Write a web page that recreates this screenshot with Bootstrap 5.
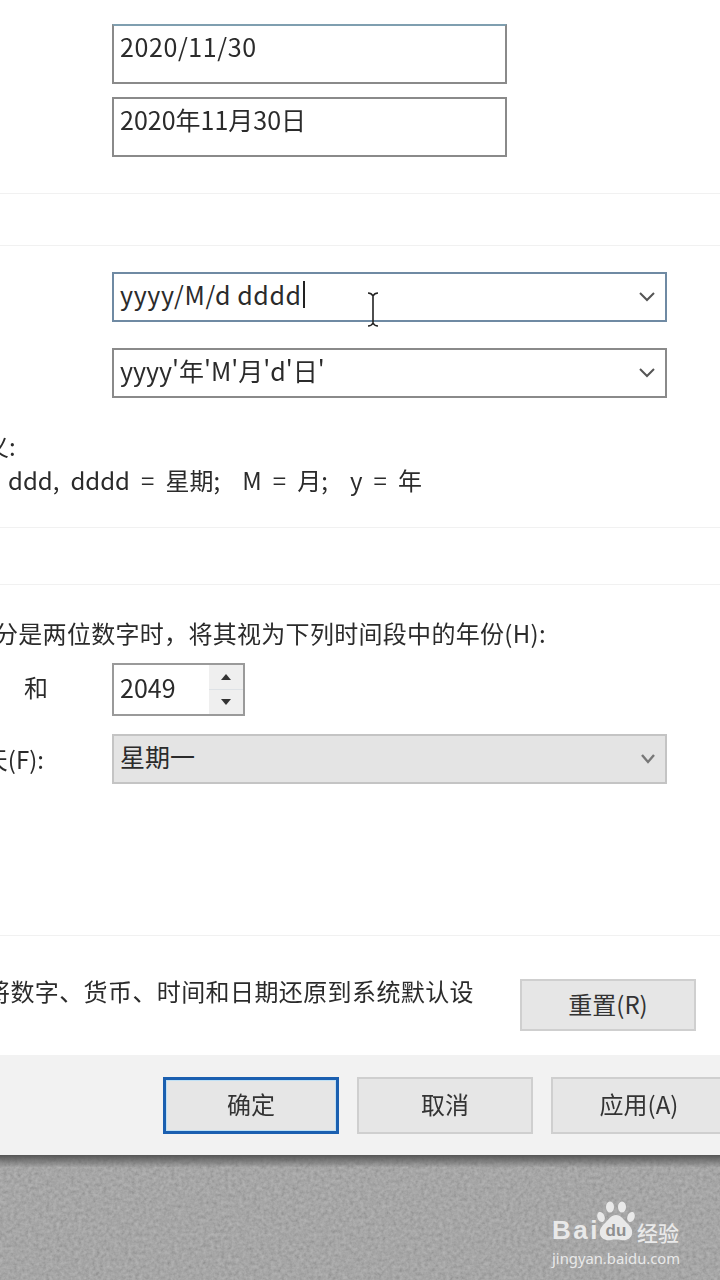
<!DOCTYPE html>
<html lang="zh-CN">
<head>
  <title>区域格式设置</title>
  <meta charset="UTF-8">
  <meta name="viewport" content="width=device-width, initial-scale=1">
  <link href="https://cdn.jsdelivr.net/npm/bootstrap@5.3.0/dist/css/bootstrap.min.css" rel="stylesheet">
  <style>
    html, body { height: 1280px; overflow: hidden; }
    body { font-family: "Noto Sans CJK SC", "Noto Sans", sans-serif; color: #2b2b2b; background: #fff; }
    .dlg-body { height: 1055px; background: #fff; overflow: hidden; }
    .dlg-inner { filter: blur(.6px); }
    .field, .combo, .spin-box {
      border: 2px solid #8a8a8a; border-radius: 0; background: #fff; color: #2b2b2b;
      font-size: 25px; line-height: 1; padding: 0 0 0 6px;
    }
    .wide-txt { letter-spacing: .6px; }
    .field { width: 395px; height: 60px; margin-left: 112px; padding-top: 8px; }
    .field-a { margin-top: 24px; border-top-color: #7f9fb0; }
    .field-b { margin-top: 13px; }
    .hair { height: 1px; background: #f1f1f1; }
    .hair-a { margin-top: 36px; }
    .hair-b { margin-top: 51px; }
    .combo { width: 555px; height: 50px; margin-left: 112px; padding-right: 10px; padding-bottom: 5px; }
    .combo svg.chev { margin-top: 5px; }
    .combo-a { margin-top: 26px; border-color: #6f8aa3; position: relative; }
    .combo-b { margin-top: 26px; }
    .combo-c { background: #e4e4e4; border-color: #c4c4c4; }
    .caret-bar { width: 2px; height: 27px; background: #222; margin-left: 1px; }
    .ibeam { position: absolute; left: 252px; top: 18px; }
    .txt-line { white-space: nowrap; font-size: 24px; line-height: 34px; }
    .clip-line { display: flex; justify-content: flex-end; overflow: hidden; white-space: nowrap; font-size: 24px; line-height: 34px; }
    .hint-a { margin-top: 31px; margin-left: -15px; }
    .hint-b { margin-left: 8px; word-spacing: 5.7px; }
    .hair-c { margin-top: 30px; }
    .hair-d { margin-top: 56px; }
    .hint-c { margin-top: 31px; margin-left: -6px; letter-spacing: .3px; }
    .year-row { margin-top: 13px; height: 53px; }
    .and-label { width: 112px; padding-left: 24px; font-size: 24px; padding-bottom: 5px; }
    .spin-box { width: 133px; height: 53px; border-color: #9a9a9a; padding-right: 0; }
    .spin-num { padding-bottom: 5px; }
    .spin-btns { width: 34px; height: 100%; background: #efefef; }
    .spin-btn { height: 50%; }
    .day-row { margin-top: 18px; height: 50px; }
    .day-label { width: 112px; flex: none; }
    .day-clip { width: 44px; }
    .day-row .combo { margin-left: 0; }
    .hair-e { margin-top: 151px; }
    .reset-row { margin-top: 43px; height: 53px; padding-right: 24px; }
    .reset-label { width: 474px; margin-top: -5px; letter-spacing: .4px; }
    .push-btn {
      border: 2px solid #cfcfcf; border-radius: 0; background: #e6e6e6; color: #333;
      font-size: 24px; line-height: 1; padding: 0 0 4px;
    }
    .reset-btn { width: 176px; height: 52px; margin-left: 46px; padding-bottom: 2px; }
    .dlg-foot { height: 100px; background: #f2f2f2; padding-top: 22px; overflow: hidden; }
    .dlg-foot .push-btn { height: 57px; flex: none; width: 176px; }
    .foot-gap { margin-left: 163px; gap: 18px; }
    .push-btn.is-default { border: 3px solid #1a5fb0; box-shadow: inset 0 0 0 1px #bfe0f5; }
    .desk { position: relative; height: 125px; overflow: hidden; background: #9c9c9c; }
    .desk-edge { position: absolute; left: 0; right: 0; top: 0; height: 12px; background: linear-gradient(#555, rgba(120,120,120,.1)); }
    .desk-noise { display: block; }
    .mark-box { position: absolute; left: 552px; top: 47px; width: 132px; color: #e9e9e9; }
    .mark-top { height: 46px; align-items: flex-end; padding-bottom: 5px; font-family: "Liberation Sans", sans-serif; font-weight: 700; font-size: 26px; line-height: 1; letter-spacing: 2.5px; }
    .mark-paw { flex: none; margin-left: -3px; }
    .mark-cn { font-family: "Noto Sans CJK SC", sans-serif; font-weight: 500; font-size: 21px; margin-left: 2px; letter-spacing: 0; }
    .mark-url { font-family: "Noto Sans", sans-serif; font-size: 14.8px; line-height: 20px; white-space: nowrap; }
  </style>
</head>
<body>

<div class="dlg-body">
  <div class="dlg-inner">
    <div class="field field-a wide-txt">2020/11/30</div>
    <div class="field field-b">2020年11月30日</div>
    <div class="hair hair-a"></div>
    <div class="hair hair-b"></div>

    <div class="combo combo-a d-flex align-items-center">
      <span class="wide-txt">yyyy/M/d dddd</span><span class="caret-bar"></span>
      <svg class="ibeam" width="14" height="35" viewBox="0 0 14 35" fill="none" stroke="#222" stroke-width="1.6"><path d="M2 1c3 0 4 1 5 3 1-2 2-3 5-3M7 4v27M2 34c3 0 4-1 5-3 1 2 2 3 5 3"/></svg>
      <svg class="chev ms-auto" width="16" height="10" viewBox="0 0 16 10" fill="none" stroke="#555" stroke-width="2"><path d="M1 1l7 7 7-7"/></svg>
    </div>
    <div class="combo combo-b d-flex align-items-center">
      <span>yyyy'年'M'月'd'日'</span>
      <svg class="chev ms-auto" width="16" height="10" viewBox="0 0 16 10" fill="none" stroke="#555" stroke-width="2"><path d="M1 1l7 7 7-7"/></svg>
    </div>

    <div class="txt-line hint-a">义:</div>
    <div class="txt-line hint-b">ddd, dddd = 星期;&nbsp; M = 月;&nbsp; y = 年</div>
    <div class="hair hair-c"></div>
    <div class="hair hair-d"></div>

    <div class="txt-line hint-c">分是两位数字时&#xFF0C;将其视为下列时间段中的年份(H):</div>
    <div class="year-row d-flex align-items-center">
      <div class="and-label">和</div>
      <div class="spin-box d-flex align-items-center justify-content-between">
        <span class="spin-num">2049</span>
        <div class="spin-btns d-flex flex-column">
          <div class="spin-btn d-flex align-items-center justify-content-center border-bottom">
            <svg width="10" height="6" viewBox="0 0 10 6" fill="#333"><path d="M5 0l5 6H0z"/></svg>
          </div>
          <div class="spin-btn d-flex align-items-center justify-content-center">
            <svg width="10" height="6" viewBox="0 0 10 6" fill="#333"><path d="M0 0h10L5 6z"/></svg>
          </div>
        </div>
      </div>
    </div>
    <div class="day-row d-flex align-items-center">
      <div class="day-label"><div class="clip-line day-clip">天(F):</div></div>
      <div class="combo combo-c d-flex align-items-center h-100">
        <span>星期一</span>
        <svg class="chev ms-auto" width="14" height="10" viewBox="0 0 14 10" fill="none" stroke="#777" stroke-width="2.4"><path d="M1 1l6 7 6-7"/></svg>
      </div>
    </div>

    <div class="hair hair-e"></div>
    <div class="reset-row d-flex">
      <div class="clip-line reset-label">将数字、货币、时间和日期还原到系统默认设</div>
      <button type="button" class="btn push-btn reset-btn">重置(R)</button>
    </div>
  </div>
</div>

<div class="dlg-foot">
  <div class="d-flex foot-gap dlg-inner">
    <button type="button" class="btn push-btn is-default">确定</button>
    <button type="button" class="btn push-btn">取消</button>
    <button type="button" class="btn push-btn">应用(A)</button>
  </div>
</div>

<div class="desk">
  <svg class="desk-noise" width="720" height="125">
    <filter id="grain"><feTurbulence type="fractalNoise" baseFrequency="0.28" numOctaves="3" seed="9"/><feColorMatrix type="saturate" values="0"/><feComponentTransfer><feFuncA type="linear" slope="0" intercept=".32"/></feComponentTransfer></filter>
    <rect width="720" height="125" fill="#9c9c9c"/>
    <rect width="720" height="125" filter="url(#grain)"/>
  </svg>
  <div class="desk-edge"></div>
  <div class="mark-box">
    <div class="mark-top d-flex">
      <span>Bai</span>
      <svg class="mark-paw" width="38" height="42" viewBox="0 0 38 42" fill="#e9e9e9">
        <ellipse cx="4" cy="16" rx="3.6" ry="5.2" transform="rotate(-20 4 16)"/>
        <ellipse cx="13" cy="6" rx="4" ry="5.6"/>
        <ellipse cx="25" cy="6" rx="4" ry="5.6"/>
        <ellipse cx="34" cy="16" rx="3.6" ry="5.2" transform="rotate(20 34 16)"/>
        <path d="M19 14c5 0 7 4 10 7 4 4 7 7 6 12-1 5-6 7-11 6-3-.6-7-.6-10 0-5 1-10-1-11-6-1-5 2-8 6-12 3-3 5-7 10-7z"/>
        <text x="19" y="35" text-anchor="middle" font-family="Liberation Sans, sans-serif" font-weight="700" font-size="17" letter-spacing="0" fill="#8f8f8f">du</text>
      </svg>
      <span class="mark-cn">经验</span>
    </div>
    <div class="mark-url">jingyan.baidu.com</div>
  </div>
</div>

</body>
</html>
